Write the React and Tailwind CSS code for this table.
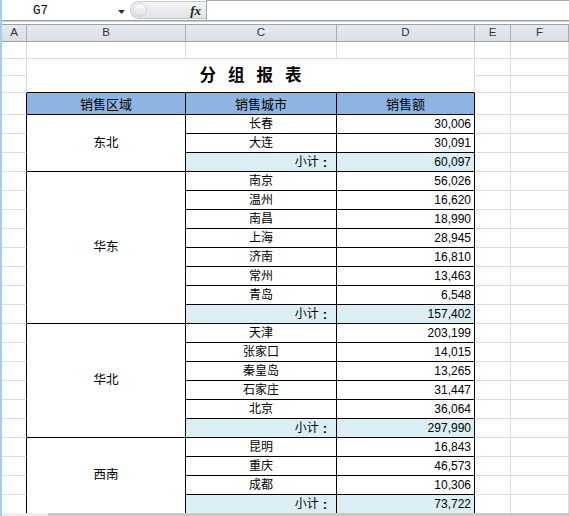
import React from "react";

const regions = [
  { name: "东北", span: "row-span-3", rows: [["长春", "30,006"], ["大连", "30,091"]], total: "60,097" },
  {
    name: "华东",
    span: "row-span-8",
    rows: [["南京", "56,026"], ["温州", "16,620"], ["南昌", "18,990"], ["上海", "28,945"], ["济南", "16,810"], ["常州", "13,463"], ["青岛", "6,548"]],
    total: "157,402",
  },
  {
    name: "华北",
    span: "row-span-6",
    rows: [["天津", "203,199"], ["张家口", "14,015"], ["秦皇岛", "13,265"], ["石家庄", "31,447"], ["北京", "36,064"]],
    total: "297,990",
  },
  { name: "西南", span: "row-span-4", rows: [["昆明", "16,843"], ["重庆", "46,573"], ["成都", "10,306"]], total: "73,722" },
];

const G = "border-[#dadcdd]";

function A({ dark }) {
  return <div className={`border-b border-r ${G} ${dark ? "!border-r-black" : ""}`} />;
}
function EF() {
  return (
    <>
      <div className={`border-b border-r ${G}`} />
      <div className={`border-b border-r ${G}`} />
    </>
  );
}

export default function App() {
  const cells = [];
  // Row 1
  cells.push(<A key="r1a" />);
  cells.push(<div key="r1b" className={`border-b border-r ${G}`} />);
  cells.push(<div key="r1c" className={`border-b border-r ${G}`} />);
  cells.push(<div key="r1d" className={`border-b border-r ${G}`} />);
  cells.push(<EF key="r1ef" />);
  // Row 2-3 title
  cells.push(<A key="r2a" />);
  cells.push(
    <div key="title" className={`col-span-3 row-span-2 border-r ${G} border-b !border-b-black flex items-center justify-center bg-white`}>
      <span className="text-[16.5px] font-bold leading-none tracking-[12px] pl-[12px] text-black">分组报表</span>
    </div>
  );
  cells.push(<EF key="r2ef" />);
  cells.push(<A key="r3a" />);
  cells.push(<EF key="r3ef" />);
  // Header row
  cells.push(<A key="r4a" dark />);
  ["销售区域", "销售城市", "销售额"].forEach((h) =>
    cells.push(
      <div key={h} className="border-b border-r border-black bg-[#8db4e2] flex items-center justify-center text-[13px] leading-none text-black pt-[1px]">
        {h}
      </div>
    )
  );
  cells.push(<EF key="r4ef" />);

  regions.forEach((r, ri) => {
    const all = [...r.rows.map((x) => ({ city: x[0], val: x[1], sub: false })), { city: "小计", val: r.total, sub: true }];
    all.forEach((row, i) => {
      cells.push(<A key={`a${ri}-${i}`} dark />);
      if (i === 0) {
        cells.push(
          <div key={`b${ri}`} className={`${r.span} border-b border-r border-black bg-white flex items-center justify-center text-[12.5px] leading-none text-black`}>
            {r.name}
          </div>
        );
      }
      cells.push(
        <div
          key={`c${ri}-${i}`}
          className={`border-b border-r border-black flex items-center text-[12px] leading-none text-black ${
            row.sub ? "bg-[#daeef3] justify-end pr-[9px]" : "bg-white justify-center"
          }`}
        >
          {row.city}
          {row.sub && <span className="ml-[4px] text-[13px] font-bold leading-none">:</span>}
        </div>
      );
      cells.push(
        <div
          key={`d${ri}-${i}`}
          className={`border-b border-r border-black flex items-center justify-end pr-[3px] text-[12px] leading-none text-black ${
            row.sub ? "bg-[#daeef3]" : "bg-white"
          }`}
        >
          {row.val}
        </div>
      );
      cells.push(<EF key={`ef${ri}-${i}`} />);
    });
  });

  return (
    <div className="w-[569px] h-[516px] overflow-hidden bg-white border-l-2 border-[#a9cbec] flex flex-col font-['Liberation_Sans','Noto_Sans_CJK_SC',sans-serif]">
      {/* Top bar */}
      <div className="h-[21px] shrink-0 flex border-b border-[#9c9fa4] bg-white">
        <div className="w-[128px] h-full flex items-center justify-between pl-[31px] pr-[5px]">
          <span className="font-['Liberation_Mono',monospace] text-[12.5px] leading-none text-black pt-[3px]">G7</span>
          <svg width="7" height="4" viewBox="0 0 7 4" className="mt-[3px]">
            <path d="M0 0 H7 L3.5 4 Z" fill="#333" />
          </svg>
        </div>
        <div className="w-[76px] h-[18px] mt-[1px] rounded-l-full border border-[#c3c7ce] border-r-0 bg-gradient-to-b from-[#f4f5f7] to-[#dfe2e7] flex items-center justify-between pl-[2px] pr-[5px]">
          <div className="w-[14px] h-[14px] rounded-full border border-[#d0d3d8] bg-gradient-to-b from-[#ffffff] to-[#dcdfe3]" />
          <span className="font-['Liberation_Serif',serif] italic font-bold text-[13px] leading-none text-[#222]">fx</span>
        </div>
        <div className="flex-1 h-full border-l border-t border-[#a3a6ab] bg-white" />
      </div>
      <div className="h-[3px] shrink-0 border-t border-[#c9ced6] bg-white" />
      {/* Column headers */}
      <div className="h-[18px] shrink-0 grid grid-cols-[25px_159px_151px_138px_36px_1fr] border-t border-b border-[#9ea2a8] bg-gradient-to-b from-[#e6e9ee] to-[#dcdfe4] text-[11.5px] leading-none text-[#333]">
        {["A", "B", "C", "D", "E", "F"].map((c) => (
          <div key={c} className="border-r border-[#a9adb3] flex items-center justify-center">
            {c}
          </div>
        ))}
      </div>
      {/* Sheet body */}
      <div className="flex-1 overflow-hidden">
        <div className="grid grid-cols-[25px_159px_151px_138px_36px_1fr] grid-rows-[17px_17px_17px_22px_repeat(21,19px)]">
          {cells}
        </div>
      </div>
      {/* Horizontal scrollbar */}
      <div className="h-[3px] shrink-0 flex">
        <div className="w-[46px] bg-[#efefef]" />
        <div className="flex-1 bg-[#c8c8c8]" />
      </div>
    </div>
  );
}
